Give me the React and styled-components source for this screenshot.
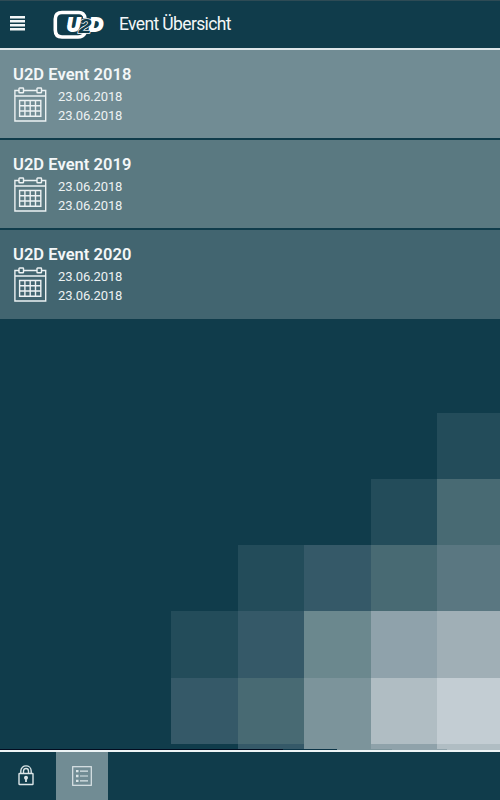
import React, { useState } from "react";
import styled, { createGlobalStyle } from "styled-components";

const events = [
  { name: "U2D Event 2018", start: "23.06.2018", end: "23.06.2018", color: "#718c94" },
  { name: "U2D Event 2019", start: "23.06.2018", end: "23.06.2018", color: "#5a7981" },
  { name: "U2D Event 2020", start: "23.06.2018", end: "23.06.2018", color: "#426570" },
];

const none = "transparent";

// one entry per tile, left to right, top to bottom
const tiles = [
  none, none, none, none, "#234c5a",
  none, none, none, "#234c5a", "#486a73",
  none, "#234c5a", "#355968", "#486a73", "#5a7781",
  "#234c5a", "#355968", "#6b888e", "#8fa2ab", "#a0afb6",
  "#355968", "#486a73", "#7c949b", "#b0bdc3", "#c3cdd3",
  none, "#355968", "#7c949b", "#8fa2aa", "#b0bdc3",
];

const GlobalStyle = createGlobalStyle`
  * {
    box-sizing: border-box;
  }

  body {
    margin: 0;
    background: #103c4b;
    font-family: Roboto, "Open Sans", sans-serif;
    color: #f3f7f8;
  }
`;

const Page = styled.div`
  display: flex;
  flex-direction: column;
  height: 100vh;
  min-height: 800px;
  overflow: hidden;
`;

const Header = styled.header`
  display: flex;
  align-items: center;
  height: 50px;
  flex: none;
  padding-left: 10px;
  border-top: 1px solid #2e4b55;
  border-bottom: 2px solid #dfe7ea;
`;

const MenuButton = styled.button`
  display: flex;
  width: 15px;
  margin: -2px 28px 0 0;
  padding: 0;
  border: none;
  background: none;
`;

const PageTitle = styled.h1`
  margin: -2px 0 0 14px;
  font-size: 17.5px;
  line-height: 24px;
  font-weight: 400;
  letter-spacing: -0.63px;
  white-space: nowrap;
`;

const EventList = styled.main`
  display: flex;
  flex-direction: column;
  flex: none;
`;

const EventRow = styled.article`
  height: 90px;
  padding: 15px 13px 0;
  background: ${(props) => props.$color};
  border-bottom: 2px solid #103c4b;

  &:last-child {
    border-bottom-width: 1px;
  }
`;

const EventName = styled.h2`
  margin: 0;
  font-size: 16.5px;
  line-height: 20px;
  font-weight: 600;
  letter-spacing: 0.05px;
`;

const EventInfo = styled.div`
  display: flex;
  gap: 11px;
  padding-left: 1px;
`;

const Dates = styled.div`
  padding-top: 3px;
  font-size: 13px;
  line-height: 18.5px;
  letter-spacing: -0.1px;
  color: #edf2f3;
`;

const Backdrop = styled.div`
  display: flex;
  justify-content: flex-end;
  align-items: flex-end;
  flex: 1;
`;

const Mosaic = styled.div`
  display: grid;
  grid-template-columns: repeat(4, 66.5px) 63px;
  grid-template-rows: repeat(5, 66.3px) 5px;
`;

const Tile = styled.div`
  background: ${(props) => props.$color};
`;

// thin shadow line that runs out towards the light tiles
const Edge = styled.div`
  height: 1px;
  flex: none;
  background: linear-gradient(
    to right,
    #020c20 0 283px,
    #0b3346 283px 337px,
    #7c949b 337px 392px,
    #8fa2aa 392px 447px,
    #b0bdc3 447px
  );
`;

const Footer = styled.footer`
  display: flex;
  height: 50px;
  flex: none;
  border-top: 2px solid #edf4f6;
`;

const Tab = styled.button`
  display: flex;
  align-items: center;
  justify-content: center;
  width: ${(props) => props.$width}px;
  padding: 0;
  border: none;
  color: #dce5e7;
  background: ${(props) => (props.$active ? "#718c94" : "transparent")};
`;

const LockTab = styled(Tab)`
  padding: 0 5px 1px 0;
`;

const MenuIcon = () => (
  <svg width="15" height="15" viewBox="0 0 15 15" stroke="#f3f7f8" strokeWidth="2.4">
    <path d="M0 1.2 H15 M0 5.2 H15 M0 9.2 H15 M0 13.2 H15" />
  </svg>
);

const Logo = () => (
  <svg width="52" height="30" viewBox="0 0 52 30" aria-label="U2D">
    <path
      d="M32 8 Q31 2.5 26 2.5 H9 Q2.3 2.5 2.3 9 V20 Q2.3 27 9 27 H25 Q30 27 32 23"
      fill="none"
      stroke="#fff"
      strokeWidth="3.6"
    />
    <g
      fontFamily="Liberation Sans, sans-serif"
      fontWeight="700"
      fontStyle="italic"
      fill="#fff"
      stroke="#103c4b"
      strokeWidth="3.5"
      paintOrder="stroke"
    >
      <text x="14" y="20.5" fontSize="18" textLength="13" lengthAdjust="spacingAndGlyphs">U</text>
      <text x="36" y="20.5" fontSize="18" textLength="14" lengthAdjust="spacingAndGlyphs">D</text>
    </g>
    <g
      fontFamily="Liberation Sans, sans-serif"
      fontWeight="700"
      fontStyle="italic"
      fill="#fff"
      stroke="#fff"
      strokeWidth="1.8"
    >
      <text x="14" y="20.5" fontSize="18" textLength="13" lengthAdjust="spacingAndGlyphs">U</text>
      <text x="36" y="20.5" fontSize="18" textLength="14" lengthAdjust="spacingAndGlyphs">D</text>
      <text
        x="25.5"
        y="23"
        fontSize="21"
        textLength="13"
        lengthAdjust="spacingAndGlyphs"
        fill="#103c4b"
        strokeWidth="1.3"
        paintOrder="stroke"
      >
        2
      </text>
    </g>
  </svg>
);

const CalendarIcon = () => (
  <svg width="33" height="38" viewBox="0 -1 33 38" fill="none" stroke="#edf2f3" strokeWidth="1.4">
    <path d="M5 4.5 H0.9 V35 H31.7 V4.5 H27.5 M9.5 4.5 H23 M0.9 10 H31.7" />
    <rect x="5" y="2" width="4.5" height="4.8" rx="0.6" />
    <rect x="23" y="2" width="4.5" height="4.8" rx="0.6" />
    <path d="M5.6 14.5 H26.8 V30.3 H5.6 Z M10.9 14.5 V30.3 M16.2 14.5 V30.3 M21.5 14.5 V30.3 M5.6 19.8 H26.8 M5.6 25 H26.8" />
  </svg>
);

const LockIcon = () => (
  <svg width="16" height="21" viewBox="0 0 16 21" fill="none" stroke="currentColor" strokeWidth="1.4">
    <rect x="1" y="8.5" width="14" height="11" rx="0.5" />
    <path d="M2.8 8.5 V6 C2.8 -0.8 13.2 -0.8 13.2 6 V8.5 M5.5 8.5 V6.2 C5.5 2.5 10.5 2.5 10.5 6.2 V8.5" />
    <circle cx="8" cy="12.7" r="1.3" fill="currentColor" />
    <path d="M8 13 V17" strokeWidth="1.8" />
  </svg>
);

const ListIcon = () => (
  <svg width="20" height="20" viewBox="0 0 20 20" fill="none" stroke="currentColor" strokeWidth="1.2">
    <rect x="0.7" y="0.7" width="18.6" height="18.6" />
    <path d="M8 5.2 H16 M8 10 H16 M8 14.8 H16" />
    <path d="M4 5.2 H6.5 M4 10 H6.5 M4 14.8 H6.5" strokeWidth="2.3" />
  </svg>
);

const App = () => {
  const [tab, setTab] = useState("list");

  return (
    <>
      <GlobalStyle />
      <Page>
        <Header>
          <MenuButton aria-label="Menu">
            <MenuIcon />
          </MenuButton>
          <Logo />
          <PageTitle>Event Übersicht</PageTitle>
        </Header>
        <EventList>
          {events.map((event) => (
            <EventRow key={event.name} $color={event.color}>
              <EventName>{event.name}</EventName>
              <EventInfo>
                <CalendarIcon />
                <Dates>
                  <div>{event.start}</div>
                  <div>{event.end}</div>
                </Dates>
              </EventInfo>
            </EventRow>
          ))}
        </EventList>
        <Backdrop>
          <Mosaic>
            {tiles.map((color, index) => (
              <Tile key={index} $color={color} />
            ))}
          </Mosaic>
        </Backdrop>
        <Edge />
        <Footer>
          <LockTab $width={56} $active={tab === "lock"} onClick={() => setTab("lock")}>
            <LockIcon />
          </LockTab>
          <Tab $width={52} $active={tab === "list"} onClick={() => setTab("list")}>
            <ListIcon />
          </Tab>
        </Footer>
      </Page>
    </>
  );
};

export default App;
